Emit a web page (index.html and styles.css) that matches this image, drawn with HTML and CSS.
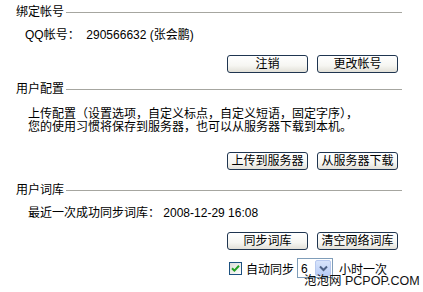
FILE: index.html
```html
<!DOCTYPE html>
<html lang="zh-CN">
<head>
    <meta charset="UTF-8">
    <title>帐号与词库</title>
    <link rel="stylesheet" href="styles.css">
</head>
<body>
    <div class="panel">

        <!-- 绑定帐号 -->
        <div class="group-title"><span>绑定帐号</span><i class="rule"></i></div>
        <div class="line account">QQ帐号：&nbsp; <span class="num">290566632</span> (张会鹏)</div>
        <div class="buttons first">
            <button class="xp-btn">注销</button>
            <button class="xp-btn">更改帐号</button>
        </div>

        <!-- 用户配置 -->
        <div class="group-title second"><span>用户配置</span><i class="rule"></i></div>
        <p class="desc">上传配置（设置选项，自定义标点，自定义短语，固定字序），<br>您的使用习惯将保存到服务器，也可以从服务器下载到本机。</p>
        <div class="buttons upload">
            <button class="xp-btn">上传到服务器</button>
            <button class="xp-btn">从服务器下载</button>
        </div>

        <!-- 用户词库 -->
        <div class="group-title third"><span>用户词库</span><i class="rule"></i></div>
        <div class="line sync">最近一次成功同步词库：&nbsp;<span class="num">2008-12-29 16:08</span></div>
        <div class="actions">
            <div class="buttons">
                <button class="xp-btn">同步词库</button>
                <button class="xp-btn">清空网络词库</button>
            </div>
            <div class="auto-row">
                <span class="xp-check">
                    <svg width="9" height="9" viewBox="0 0 9 9"><path d="M1 4.2 L3.4 6.6 L8 1.8" fill="none" stroke="#21a121" stroke-width="2"/></svg>
                </span>
                <span class="label">自动同步</span>
                <span class="xp-select">
                    <span class="value">6</span>
                    <span class="drop">
                        <svg width="9" height="7" viewBox="0 0 9 7"><path d="M1 1.5 L4.5 5 L8 1.5" fill="none" stroke="#4d6185" stroke-width="2"/></svg>
                    </span>
                </span>
                <span class="label">小时一次</span>
            </div>
        </div>

        <div class="watermark">泡泡网 PCPOP.COM</div>
    </div>
</body>
</html>
```

FILE: styles.css
```css
body {
    margin: 0;
    background-color: #fff;
    color: #000;
    font-family: "Liberation Sans", "Noto Sans CJK SC", sans-serif;
    font-size: 12px;
}
.panel {
    position: relative;
    width: 423px;
    height: 292px;
    padding: 5px 21px 0 16px;
    box-sizing: border-box;
    overflow: hidden;
}
.group-title {
    display: flex;
    align-items: center;
    gap: 2px;
    height: 14px;
    line-height: 14px;
}
.group-title .rule {
    flex: 1;
    height: 0;
    border-top: 1px solid #a6a6a0;
}
.group-title.second {
    margin-top: 9px;
}
.group-title.third {
    margin-top: 13px;
}
.line {
    height: 14px;
    line-height: 14px;
    padding-left: 12px;
    margin-top: 9px;
    white-space: nowrap;
}
.account {
    padding-left: 9px;
}
.desc {
    margin: 12px 0 0;
    padding-left: 12px;
    line-height: 13px;
    white-space: nowrap;
}
.buttons {
    display: flex;
    justify-content: flex-end;
    gap: 9px;
    margin-right: 4px;
}
.buttons.first {
    margin-top: 13px;
}
.buttons.upload {
    margin-top: 18px;
}
.actions {
    width: 171px;
    margin: 12px 4px 0 auto;
}
.actions .buttons {
    margin-right: 0;
}
.xp-btn {
    width: 81px;
    height: 18px;
    padding: 0;
    border: 1px solid #1f3550;
    border-radius: 3px;
    background: linear-gradient(#ffffff, #f6f6f2 60%, #e2e0d8);
    font-family: inherit;
    font-size: 12px;
    line-height: 16px;
    color: #000;
}
.auto-row {
    display: flex;
    align-items: center;
    height: 20px;
    margin-top: 8px;
    padding-left: 2px;
}
.xp-check {
    display: flex;
    align-items: center;
    justify-content: center;
    width: 11px;
    height: 11px;
    border: 1px solid #1c5180;
    background: linear-gradient(135deg, #dcdcd7, #ffffff);
}
.auto-row .label {
    margin-left: 4px;
    white-space: nowrap;
}
.xp-select {
    display: flex;
    width: 34px;
    height: 18px;
    margin: 0 6px 0 3px;
    border: 1px solid #7f9db9;
    background-color: #fff;
}
.xp-select .value {
    flex: 1;
    padding: 3px 0 0 3px;
    line-height: 14px;
}
.xp-select .drop {
    display: flex;
    align-items: center;
    justify-content: center;
    width: 16px;
    margin: 1px;
    border-radius: 2px;
    background: linear-gradient(#d8e4fb, #b9cdf6);
    border: 1px solid #b8c9ef;
    box-sizing: border-box;
}
.auto-row .xp-select + .label {
    margin-left: 0;
}
.watermark {
    position: absolute;
    left: 304px;
    top: 274px;
    font-size: 12.5px;
    line-height: 15px;
    color: #111;
    white-space: nowrap;
}
```
